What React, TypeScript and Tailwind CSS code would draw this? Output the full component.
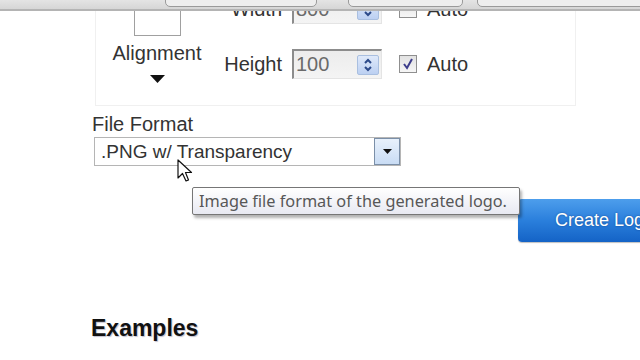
import React from "react";

function Spinner() {
  return (
    <div className="flex h-[20px] w-[22px] flex-col items-center justify-center rounded-[2px] border border-[#a9bfe0] bg-gradient-to-b from-[#dfe9fa] to-[#bcd0f2]">
      <svg width="10" height="14" viewBox="0 0 10 14">
        <path d="M2 5 L5 2 L8 5" fill="none" stroke="#2c4a8a" strokeWidth="2" />
        <path d="M2 9 L5 12 L8 9" fill="none" stroke="#2c4a8a" strokeWidth="2" />
      </svg>
    </div>
  );
}

function NumInput({ value }: { value: string }) {
  return (
    <div className="ml-[10px] flex h-[30px] w-[90px] items-center justify-between border-l-2 border-t-2 border-b border-r border-l-[#8c8c8c] border-t-[#8c8c8c] border-b-[#e4e4e4] border-r-[#e4e4e4] bg-gradient-to-b from-[#ececec] to-[#f4f4f4] pl-[2px] pr-[2px]">
      <span className="text-[20px] leading-[23px] text-[#6a6a6a]">{value}</span>
      <Spinner />
    </div>
  );
}

function Checkbox({ checked }: { checked: boolean }) {
  return (
    <div className="ml-[17px] flex h-[18px] w-[18px] items-center justify-center border border-[#8f8f8f] bg-gradient-to-b from-[#e2e2e2] to-[#f6f6f6]">
      {checked && (
        <svg width="12" height="12" viewBox="0 0 12 12">
          <path d="M2 6 L5 10 L10 1" fill="none" stroke="#3d3d8c" strokeWidth="2" />
        </svg>
      )}
    </div>
  );
}

function Row({ label, value, checked }: { label: string; value: string; checked: boolean }) {
  return (
    <div className="flex h-[30px] items-center">
      <span className="w-[58px] text-right text-[20px] leading-[23px] text-[#333]">{label}</span>
      <NumInput value={value} />
      <Checkbox checked={checked} />
      <span className="ml-[10px] text-[20px] leading-[23px] text-[#333]">Auto</span>
    </div>
  );
}

export default function App() {
  return (
    <div
      className="relative h-[360px] w-[640px] overflow-hidden bg-white"
      style={{ fontFamily: '"Liberation Sans", Arial, sans-serif' }}
    >
      <div className="pl-[92px]">
        {/* options panel */}
        <div className="-mt-[6px] ml-[3px] flex w-[481px] border border-t-0 border-[#f0f0f0] pb-[22px]">
          <div className="flex w-[122px] flex-col items-center">
            <div className="h-[42px] w-[47px] border border-[#a0a0a0] bg-white" />
            <div className="mt-[6px] text-[20px] leading-[23px] text-[#333]">Alignment</div>
            <svg className="mt-[10px]" width="15" height="8" viewBox="0 0 15 8">
              <path d="M0 0 L15 0 L7.5 8 Z" fill="#111" />
            </svg>
          </div>
          <div className="ml-[6px] flex flex-col gap-[25px]">
            <Row label="Width" value="800" checked={false} />
            <Row label="Height" value="100" checked={true} />
          </div>
        </div>

        {/* file format */}
        <div className="mt-[7px] text-[20px] leading-[23px] text-[#333]">File Format</div>
        <div className="ml-[2px] mt-[1px] flex h-[29px] w-[307px] items-center justify-between border border-[#b5b5b5] bg-white pl-[6px]">
          <span className="text-[19px] leading-[22px] text-[#333]">.PNG w/ Transparency</span>
          <div className="flex h-[27px] w-[26px] items-center justify-center border border-[#7b8fa8] bg-gradient-to-b from-[#e8f1fc] to-[#c9dcf4]">
            <svg width="9" height="5" viewBox="0 0 9 5">
              <path d="M0 0 L9 0 L4.5 5 Z" fill="#111" />
            </svg>
          </div>
        </div>

        {/* create logo */}
        <div className="ml-[426px] mt-[33px] flex h-[43px] w-[180px] items-center rounded-[4px] bg-gradient-to-b from-[#4d9eec] via-[#2a7fdc] to-[#1463c6] pl-[37px] shadow-[0_1px_1px_rgba(0,0,0,0.25)]">
          <span className="whitespace-nowrap text-[18px] leading-[21px] text-white [text-shadow:0_0_2px_rgba(0,40,100,0.6)]">
            Create Logo
          </span>
        </div>

        {/* examples */}
        <div className="-ml-[1px] mt-[73px] text-[23px] font-bold leading-[26px] text-[#111] [text-shadow:1px_1px_1px_rgba(0,0,60,0.25)]">
          Examples
        </div>
      </div>

      {/* top browser strip */}
      <div className="absolute left-0 top-0 h-[11px] w-[640px] border-b-2 border-[#b4b4b4] bg-gradient-to-b from-[#e4e4e4] to-[#d6d6d6]">
        <div className="absolute left-[165px] top-[-6px] h-[13px] w-[152px] rounded-[5px] border border-[#9a9a9a] bg-[#eeeeee]" />
        <div className="absolute left-[348px] top-[-6px] h-[13px] w-[115px] rounded-[5px] border border-[#9a9a9a] bg-[#eeeeee]" />
        <div className="absolute left-[477px] top-[-6px] h-[13px] w-[180px] rounded-[5px] border border-[#9a9a9a] bg-[#eeeeee]" />
      </div>

      {/* tooltip */}
      <div className="absolute left-[192px] top-[187px] flex h-[28px] w-[328px] items-center rounded-[2px] border border-[#767676] bg-gradient-to-b from-white to-[#e8e9f2] pl-[6px] shadow-[2px_3px_3px_rgba(0,0,0,0.3)]">
        <span
          className="whitespace-nowrap text-[16.3px] leading-[18px] text-[#575757]"
          style={{ fontFamily: '"Noto Sans", "Open Sans", sans-serif' }}
        >
          Image file format of the generated logo.
        </span>
      </div>

      {/* cursor */}
      <svg className="absolute left-[177px] top-[159px]" width="16" height="24" viewBox="0 0 16 24">
        <path
          d="M1 1 L1 19 L5.5 14.5 L9 22 L11.5 21 L8.5 13.5 L14.5 13.5 Z"
          fill="white"
          stroke="#111"
          strokeWidth="1.2"
          strokeLinejoin="round"
        />
      </svg>
    </div>
  );
}
